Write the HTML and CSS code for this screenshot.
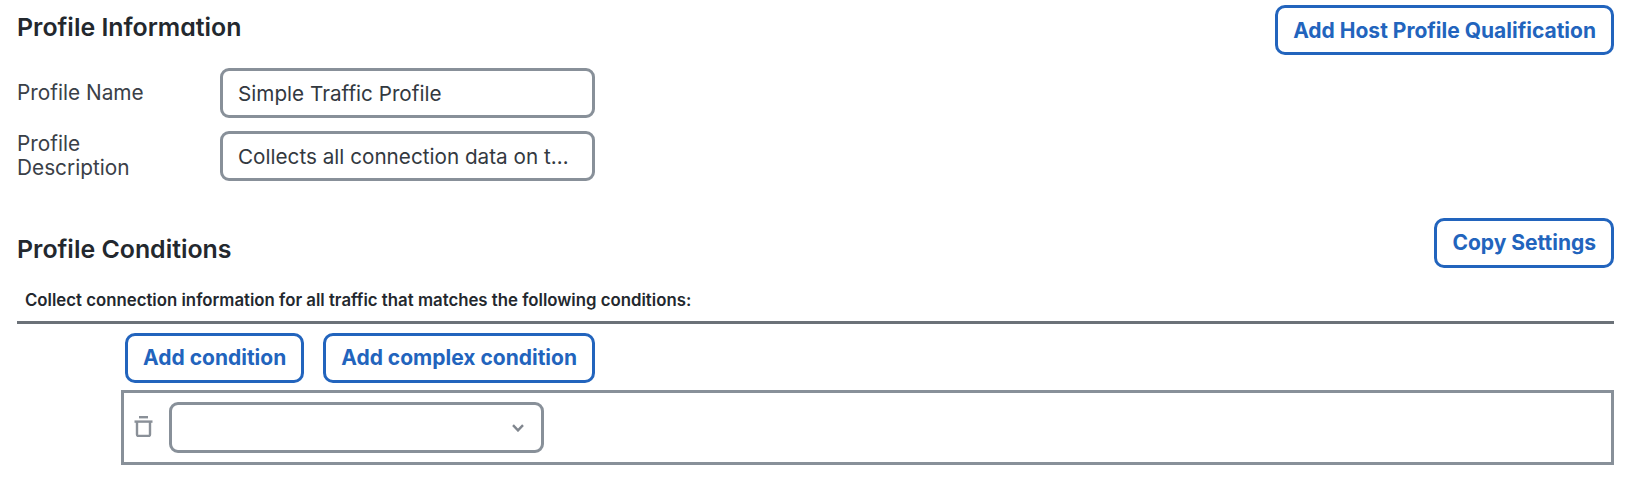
FILE: index.html
```html
<!DOCTYPE html>
<html lang="en">
<head>
<meta charset="utf-8">
<title>Profile</title>
<link rel="stylesheet" href="styles.css">
</head>
<body>
<main class="page">
  <section class="info">
    <div class="info-fields">
      <h2 class="heading">Profile Information</h2>
      <div class="field">
        <label class="field-label" for="pname">Profile Name</label>
        <input class="text-input" id="pname" type="text" value="Simple Traffic Profile">
      </div>
      <div class="field field-second">
        <label class="field-label" for="pdesc">Profile Description</label>
        <input class="text-input" id="pdesc" type="text" value="Collects all connection data on the network">
      </div>
    </div>
    <button class="btn" type="button">Add Host Profile Qualification</button>
  </section>

  <section class="conditions">
    <div class="conditions-head">
      <h2 class="heading">Profile Conditions</h2>
      <button class="btn" type="button">Copy Settings</button>
    </div>
    <p class="hint">Collect connection information for all traffic that matches the following conditions:</p>
    <div class="editor">
      <div class="actions">
        <button class="btn" type="button">Add condition</button>
        <button class="btn" type="button">Add complex condition</button>
      </div>
      <div class="cond-box">
        <svg class="trash" viewBox="0 0 19 21" width="19" height="21" aria-hidden="true">
          <path d="M5 1.2h9" />
          <path d="M0.5 5.6h18" />
          <path d="M3 5.6v12.9a1.5 1.5 0 0 0 1.5 1.5h10a1.5 1.5 0 0 0 1.5-1.5V5.6" />
        </svg>
        <div class="select">
          <svg class="chevron" viewBox="0 0 12 8" width="12" height="8" aria-hidden="true">
            <path d="M1 1.2l5 5.2 5-5.2" />
          </svg>
        </div>
      </div>
    </div>
  </section>
</main>
</body>
</html>
```

FILE: styles.css
```css
* { box-sizing: border-box; }

html, body { margin: 0; background: #fff; }

body {
  font-family: Inter, "Liberation Sans", sans-serif;
  color: #23282e;
}

.page { padding: 5px 14px 0 17px; }

.info {
  display: flex;
  justify-content: space-between;
  align-items: flex-start;
}

.info-fields { width: 578px; }

.heading {
  margin: 0;
  font-size: 24.9px;
  line-height: 28px;
  font-weight: 600;
  font-feature-settings: "cv11" 1;
  color: #23282e;
}

.info-fields .heading { margin-top: 8px; margin-bottom: 27px; }

.field {
  display: grid;
  grid-template-columns: 203px 375px;
  align-items: center;
  height: 50px;
}

.field-second { margin-top: 13px; }

.field-label {
  max-width: 150px;
  font-size: 20.8px;
  line-height: 24px;
  color: #3a4047;
}

.text-input {
  width: 100%;
  height: 50px;
  padding: 0 14px 0 15px;
  border: 3px solid #889099;
  border-radius: 9px;
  background: #fff;
  font: 400 20.7px Inter, "Liberation Sans", sans-serif;
  color: #33393f;
  text-overflow: ellipsis;
  outline: none;
}

.btn {
  flex: none;
  height: 50px;
  padding: 0 15px;
  border: 3px solid #2264bd;
  border-radius: 10px;
  background: #fff;
  font: 700 21px Inter, "Liberation Sans", sans-serif;
  color: #2264bd;
}

.conditions { margin-top: 36.5px; }

.conditions-head {
  display: flex;
  justify-content: space-between;
  align-items: flex-start;
}

.conditions-head .heading { margin-top: 17px; }

.hint {
  margin: 22px 0 0 8px;
  font-size: 16.8px;
  line-height: 20px;
  font-weight: 600;
}

.editor {
  margin-top: 11px;
  border-top: 3px solid #6b7178;
  padding: 9px 0 0 104px;
}

.actions { display: flex; gap: 19px; margin-left: 4px; }

.cond-box {
  display: flex;
  align-items: flex-start;
  gap: 16px;
  height: 75px;
  margin-top: 7px;
  padding: 9px 0 0 10px;
  border: 3px solid #889099;
}

.trash {
  margin-top: 14px;
  flex: none;
  fill: none;
  stroke: #8a9098;
  stroke-width: 2.4;
}

.select {
  position: relative;
  width: 375px;
  height: 51px;
  border: 3px solid #889099;
  border-radius: 9px;
  background: #fff;
}

.chevron {
  position: absolute;
  right: 17px;
  top: 19px;
  fill: none;
  stroke: #80868e;
  stroke-width: 2.4;
}
```
